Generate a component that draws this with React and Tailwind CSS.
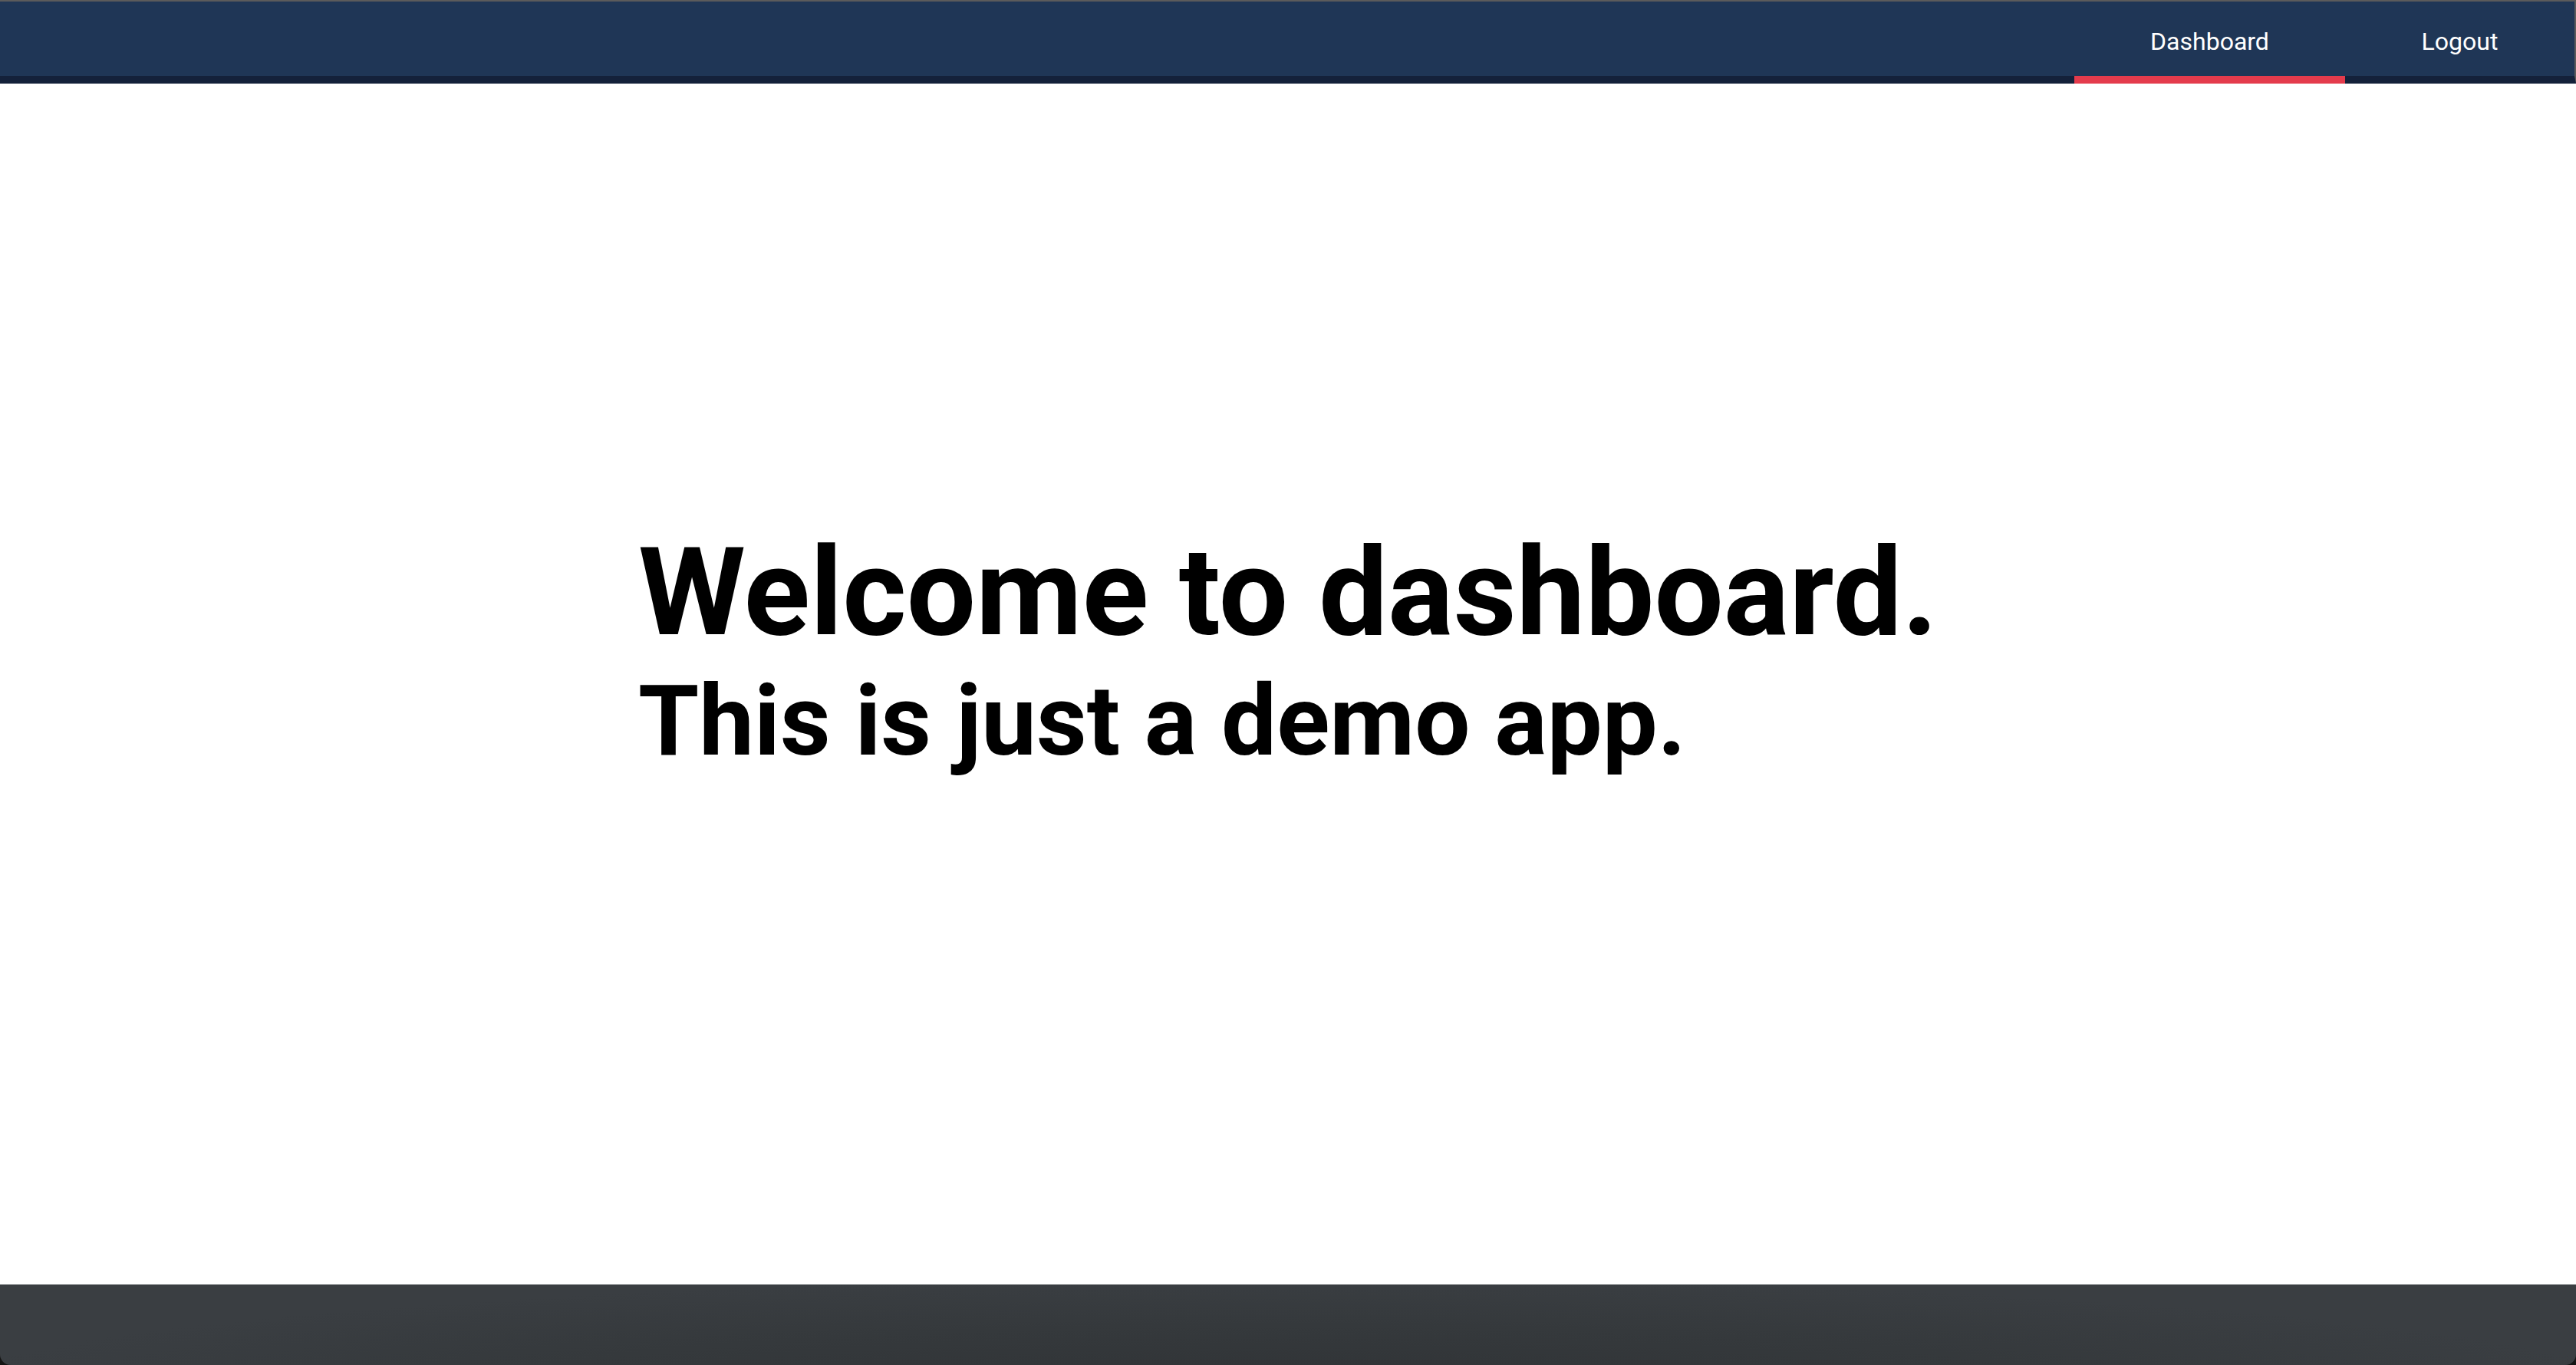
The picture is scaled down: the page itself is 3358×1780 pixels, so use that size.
import React from 'react';

const tabs = [
  { label: 'Dashboard', active: true, width: 'w-[353px]' },
  { label: 'Logout', active: false, width: 'w-[299px]' },
];

export default function App() {
  return (
    <div className="h-screen flex flex-col bg-white font-['Roboto',sans-serif]">
      {/* Top nav */}
      <header className="h-[109px] shrink-0 flex justify-end bg-[#1f3656] border-t-2 border-[#5b5b5b] border-b-[10px] border-b-[#14213a] border-r-2 border-r-[#5b5b5b]">
        <nav className="flex h-full">
          {tabs.map((t) => (
            <a
              key={t.label}
              href="#"
              className={`${t.width} flex items-center justify-center pt-[7px] text-white text-[32px] -mb-[10px] border-b-[10px] ${t.active ? 'border-[#e43b4c]' : 'border-transparent'}`}
            >
              {t.label}
            </a>
          ))}
        </nav>
      </header>

      {/* Main content */}
      <main className="flex-1 flex items-center justify-center pb-[90px]">
        <div className="text-black font-bold">
          <h1 className="text-[160px] leading-[1.16]">Welcome to dashboard.</h1>
          <h2 className="text-[128px] leading-[1.16]">This is just a demo app.</h2>
        </div>
      </main>

      {/* Footer */}
      <div className="h-[105px] shrink-0 bg-[#151515]">
        <footer className="h-full bg-[radial-gradient(ellipse_at_50%_140%,#2f3235_0%,#35393c_45%,#3a3e42_75%)] rounded-b-[14px]"></footer>
      </div>
    </div>
  );
}
